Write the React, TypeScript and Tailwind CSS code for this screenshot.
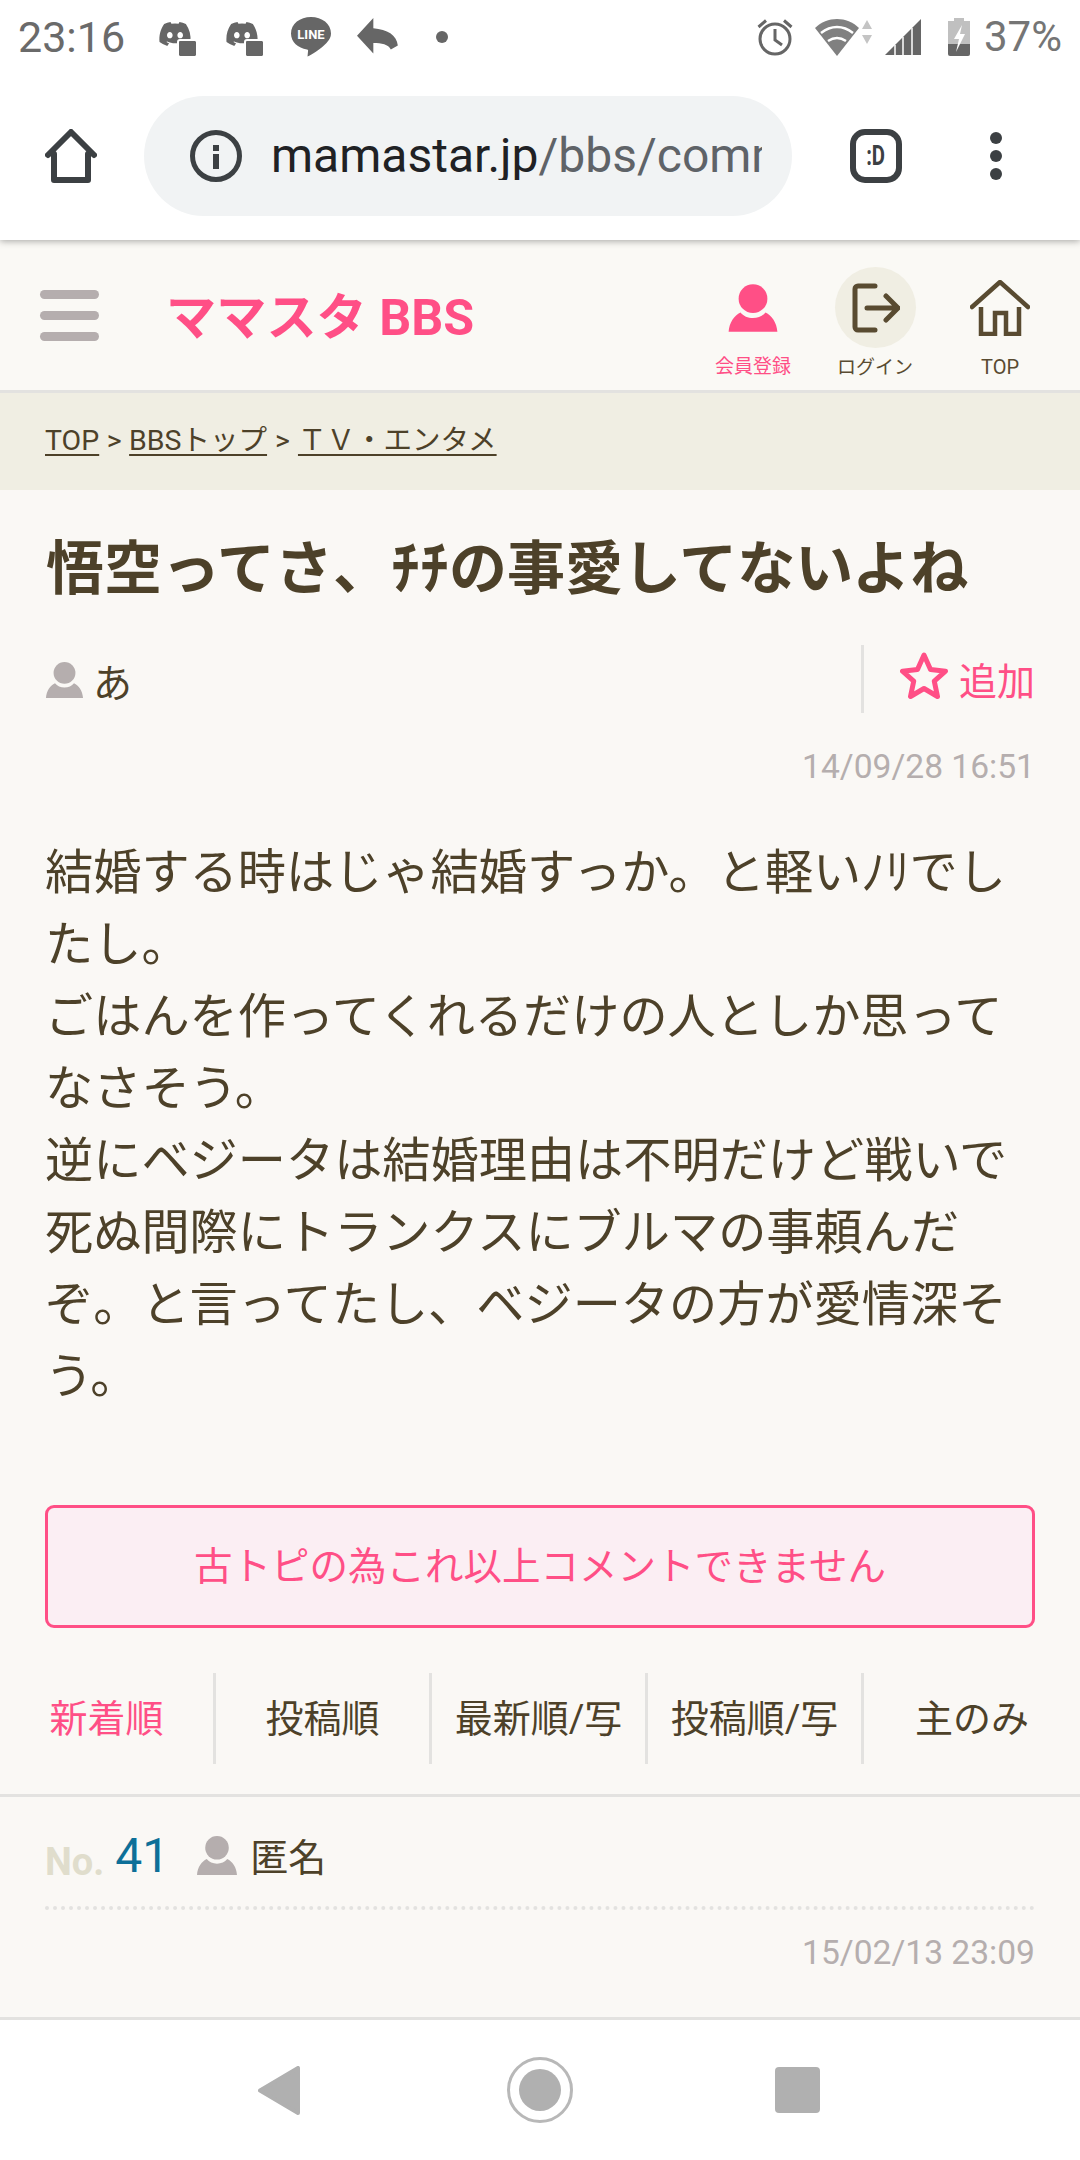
import { FaDiscord } from "react-icons/fa";

const tabs = ["新着順", "投稿順", "最新順/写", "投稿順/写", "主のみ"];

function DiscordNote() {
  return (
    <span className="relative block h-[40px] w-[38px]">
      <FaDiscord className="absolute left-0 top-[1px] h-[32px] w-[34px] text-[#666]" />
      <span className="absolute bottom-[1px] right-0 h-[15px] w-[17px] rounded-[1px] bg-[#666] outline-2 outline-white" />
    </span>
  );
}

function Person({ className }: { className: string }) {
  return (
    <svg viewBox="0 0 40 40" className={className} fill="currentColor">
      <circle cx="20" cy="12.500" r="11.500" />
      <path d="M10 23.500c2.200 2.800 6 4.500 10 4.500s7.800-1.700 10-4.500c5 2.300 9 8 9.500 15.500H.5C1 31.500 5 25.800 10 23.500z" />
    </svg>
  );
}

function StatusBar() {
  return (
    <div className="relative z-20 flex h-[72px] shrink-0 items-center bg-white pl-[18px] pr-[18px] pt-[2px] text-[#6a6a6a]">
      <span className="w-[140px] text-[43px] leading-none">23:16</span>
      <DiscordNote />
      <span className="ml-[29px]"><DiscordNote /></span>
      <svg viewBox="0 0 40 40" className="ml-[28px] h-[40px] w-[40px]">
        <path fill="#666" d="M20 0C9 0 0 6.800 0 16.500c0 8.500 7 14.500 16 16 1 .2 1.300.8 1 2l-.5 5c4-1.500 14-8 19-13.500 3-3.300 4.500-6 4.500-9.500C40 6.800 31 0 20 0z" />
        <text x="20" y="22" textAnchor="middle" fontSize="13" fontWeight="700" fill="#fff">LINE</text>
      </svg>
      <svg viewBox="3 5 18 15" className="ml-[26px] h-[38px] w-[42px]" preserveAspectRatio="none">
        <path fill="#666" d="M10 9V5l-7 7 7 7v-4.100c3.500 0 6.500.6 7.500 2.500l3 -1.500C20 11.500 16 9.500 10 9z" />
      </svg>
      <span className="ml-[37px] h-[12px] w-[12px] rounded-full bg-[#666]" />
      <span className="flex-1" />
      <svg viewBox="0 0 36 38" className="h-[38px] w-[36px]" fill="none" stroke="#666" strokeWidth="3">
        <circle cx="18" cy="21" r="15" />
        <path d="M18 11v11l7 5M1.500 9 9 2.500M34.500 9 27 2.500" />
      </svg>
      <svg viewBox="0 0 58 38" className="ml-[22px] h-[38px] w-[58px]">
        <path fill="#808080" d="M0 10C12-2 32-2 44 10L22 38z" />
        <path fill="none" stroke="#fff" strokeWidth="2.500" d="M6 15c10-8 22-8 32 0M13 23c6-4 12-4 18 0" />
        <path fill="#c4c4c4" d="m52 2 5 9H47zM52 26l5-9H47z" />
      </svg>
      <svg viewBox="0 0 36 36" className="ml-[12px] h-[36px] w-[36px]">
        <path fill="#666" d="M36 0v36H0z" />
        <path stroke="#fff" strokeWidth="1.500" d="M10 36V26M18 36V18M27 36V9" />
      </svg>
      <svg viewBox="0 0 22 38" className="ml-[27px] h-[38px] w-[22px]">
        <path fill="#c0c0c0" d="M6 0h10v3h6v24H0V3h6z" />
        <path fill="#666" d="M0 26h22v10a2 2 0 0 1-2 2H2a2 2 0 0 1-2-2z" />
        <path fill="#fff" d="M14 7 6 21h5l-3 13 9-18h-5z" />
      </svg>
      <span className="ml-[14px] text-[42px] leading-none text-[#757575]">37%</span>
    </div>
  );
}

function Toolbar() {
  return (
    <div className="relative z-10 flex h-[168px] shrink-0 items-center bg-white pl-[45px] shadow-[0_1px_7px_rgba(0,0,0,0.35)]">
      <svg viewBox="0 0 52 54" className="h-[54px] w-[52px]" fill="none" stroke="#3c4043" strokeWidth="6" strokeLinejoin="round" strokeLinecap="round">
        <path d="M9 51V25M43 25v26M9 51h34M3 26 26 3l23 23" />
      </svg>
      <div className="ml-[47px] flex h-[120px] w-[648px] items-center rounded-full bg-[#f1f3f4] pl-[46px] pr-[30px]">
        <span className="relative h-[52px] w-[52px] shrink-0 rounded-full border-[5px] border-[#3c4043]">
          <span className="absolute left-[18px] top-[10px] h-[6px] w-[6px] bg-[#3c4043]" />
          <span className="absolute left-[18px] top-[19px] h-[15px] w-[6px] bg-[#3c4043]" />
        </span>
        <div className="ml-[29px] overflow-hidden whitespace-nowrap text-[48px] leading-none text-[#5f6368]">
          <span className="text-[#202124]">mamastar.jp</span>/bbs/comment.do
        </div>
      </div>
      <div className="ml-[58px] flex h-[54px] w-[52px] items-center justify-center rounded-[15px] border-[6px] border-[#3c4043] text-[#3c4043]">
        <span className="scale-x-75 text-[27px] font-bold leading-none">:D</span>
      </div>
      <div className="ml-[88px] flex flex-col gap-[6px]">
        <span className="h-[12px] w-[12px] rounded-full bg-[#3c4043]" />
        <span className="h-[12px] w-[12px] rounded-full bg-[#3c4043]" />
        <span className="h-[12px] w-[12px] rounded-full bg-[#3c4043]" />
      </div>
    </div>
  );
}

function SiteHeader() {
  return (
    <header className="flex h-[153px] shrink-0 items-center border-b-[3px] border-[#e3e2e0] bg-[#faf9f5] pl-[40px]">
      <div className="flex w-[59px] flex-col gap-[12px]">
        <span className="h-[9px] rounded-full bg-[#b5aeae]" />
        <span className="h-[9px] rounded-full bg-[#b5aeae]" />
        <span className="h-[9px] rounded-full bg-[#b5aeae]" />
      </div>
      <div className="ml-[67px] mt-[7px] text-[50.200px] font-bold leading-none text-[#ff4f86]">ママスタ BBS</div>
      <div className="ml-auto flex h-full pr-[16px] pt-[27px]">
        <div className="flex w-[122px] flex-col items-center text-[#ff4f86]">
          <Person className="mt-[16px] h-[50px] w-[52px]" />
          <span className="mt-[24px] text-[19px] leading-none">会員登録</span>
        </div>
        <div className="flex w-[122px] flex-col items-center">
          <div className="flex h-[81px] w-[81px] items-center justify-center rounded-full bg-[#f0eee3]">
            <svg viewBox="0 0 50 50" className="h-[50px] w-[50px]" fill="none" stroke="#594b31" strokeWidth="5" strokeLinecap="round" strokeLinejoin="round">
              <path d="M25 3H8a3 3 0 0 0-3 3v38a3 3 0 0 0 3 3h17M17 25h31M36 13l12 12-12 12" />
            </svg>
          </div>
          <span className="mt-[10px] text-[19px] leading-none text-[#594b31]">ログイン</span>
        </div>
        <div className="flex w-[128px] flex-col items-center text-[#594b31]">
          <svg viewBox="0 0 60 56" className="mt-[13px] h-[56px] w-[60px]" fill="none" stroke="#594b31" strokeWidth="4.500" strokeLinecap="round" strokeLinejoin="miter">
            <path d="M2 27 30 2l28 25" strokeLinejoin="round" />
            <path d="M11 27v27h14V33h11v21h13V27" strokeLinecap="butt" />
          </svg>
          <span className="mt-[21px] text-[20px] leading-none">TOP</span>
        </div>
      </div>
    </header>
  );
}

export default function App() {
  return (
    <div className="flex h-[2160px] w-[1080px] flex-col overflow-hidden bg-[#faf8f5] font-[Roboto,'Noto_Sans_CJK_JP',sans-serif] text-[#4d4129]">
      <StatusBar />
      <Toolbar />
      <SiteHeader />
      <nav className="flex h-[97px] shrink-0 items-center bg-[#f0eee3] px-[45px] text-[28.500px] leading-none">
        <span className="underline underline-offset-[4px]">TOP</span>
        <span className="mx-[7.500px]">&gt;</span>
        <span className="underline underline-offset-[4px]">BBSトップ</span>
        <span className="mx-[8px]">&gt;</span>
        <span className="underline underline-offset-[4px]">ＴＶ・エンタメ</span>
      </nav>

      <main className="flex-1">
        <div className="px-[45px] pt-[39px]">
          <h1 className="ml-[1px] whitespace-nowrap text-[58px] font-bold leading-[80px] text-[#4d4129]">悟空ってさ、ﾁﾁの事愛してないよね</h1>

          <div className="mt-[36px] flex h-[68px] items-center">
            <Person className="mt-[2px] h-[38px] w-[39px] text-[#b5aeae]" />
            <span className="ml-[9px] mt-[10px] text-[39px] leading-none">あ</span>
            <div className="ml-auto flex h-full items-center border-l-[3px] border-[#e3e2e0] pl-[36px] text-[38px] leading-none text-[#ff4f86]">
              <svg viewBox="0 0 48 48" className="-mt-[6px] h-[48px] w-[48px]" fill="none" stroke="#ff4f86" strokeWidth="5" strokeLinejoin="round">
                <path d="m24 3 6.500 14.500 15 1.700-11.200 10 3.200 15.300L24 36.500 10.500 44.500l3.200-15.300L2.500 19.200l15-1.700z" />
              </svg>
              <span className="ml-[11px] mt-[5px]">追加</span>
            </div>
          </div>

          <div className="mt-[34px] text-right text-[33.600px] leading-[40px] text-[#b5aeae]">14/09/28 16:51</div>

          <p className="mt-[50px] text-[48.200px] leading-[72px]">
            結婚する時はじゃ結婚すっか。と軽いﾉﾘでしたし。
            <br />
            ごはんを作ってくれるだけの人としか思ってなさそう。
            <br />
            逆にベジータは結婚理由は不明だけど戦いで死ぬ間際にトランクスにブルマの事頼んだぞ。と言ってたし、ベジータの方が愛情深そう。
          </p>

          <div className="mt-[92px] flex h-[123px] items-center justify-center rounded-[9px] border-[3px] border-[#ff4f86] bg-[#fbeef3] text-[38.500px] text-[#ff4f86]">
            古トピの為これ以上コメントできません
          </div>
        </div>

        <div className="mt-[45px] grid grid-cols-5 text-[38px] leading-none">
          {tabs.map((tab, i) => (
            <div key={tab} className={`flex h-[91px] items-center justify-center whitespace-nowrap ${i < 4 ? "border-r-[3px] border-[#e3e2e0]" : ""} ${i === 0 ? "text-[#ff4f86]" : ""}`}>
              {tab}
            </div>
          ))}
        </div>

        <section className="mt-[30px] h-[226px] border-y-[3px] border-[#e3e2e0] px-[45px]">
          <div className="flex h-[113px] items-end border-b-[4px] border-dotted border-[#e3e2e0] pb-[30px]">
            <span className="translate-y-[2px] text-[38px] font-bold leading-[32px] text-[#e0ddcc]">No.</span>
            <span className="ml-[11px] text-[48px] leading-[40px] text-[#0d6f98]">41</span>
            <Person className="ml-[27px] h-[41px] w-[42px] text-[#b5aeae]" />
            <span className="ml-[12px] translate-y-[2px] text-[38px] leading-[40px]">匿名</span>
          </div>
          <div className="mt-[23px] text-right text-[33.600px] leading-[40px] text-[#b5aeae]">15/02/13 23:09</div>
        </section>
      </main>

      <div className="flex h-[140px] shrink-0 items-center justify-center bg-white pr-[2px]">
        <svg viewBox="0 0 42 49" className="h-[49px] w-[42px]">
          <path fill="#b0b0b0" stroke="#b0b0b0" strokeWidth="4" strokeLinejoin="round" d="M2 24.500 40 2v45z" />
        </svg>
        <div className="ml-[207px] flex h-[66px] w-[66px] items-center justify-center rounded-full border-[3px] border-[#b8b8b8]">
          <span className="h-[42px] w-[42px] rounded-full bg-[#b0b0b0]" />
        </div>
        <span className="ml-[202px] h-[46px] w-[45px] rounded-[4px] bg-[#b0b0b0]" />
      </div>
    </div>
  );
}
